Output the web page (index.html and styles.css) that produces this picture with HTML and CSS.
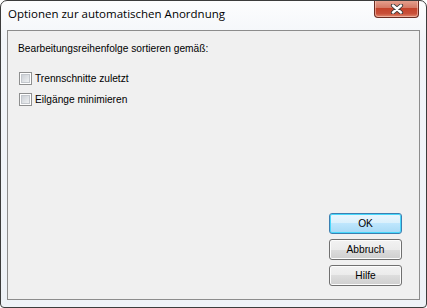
FILE: index.html
```html
<!DOCTYPE html>
<html>
<head>
<meta charset="utf-8">
<link rel="stylesheet" href="styles.css">
</head>
<body>
<div class="window">
  <div class="titlebar">
    <span class="title">Optionen zur automatischen Anordnung</span>
    <div class="close">
      <svg width="16" height="10" viewBox="0 0 16 10">
        <path d="M4 1.5 L12 8.5 M12 1.5 L4 8.5" stroke="#3a3a3a" stroke-width="4.2" stroke-linecap="round" fill="none"/>
        <path d="M4 1.5 L12 8.5 M12 1.5 L4 8.5" stroke="#ffffff" stroke-width="2.4" stroke-linecap="round" fill="none"/>
      </svg>
    </div>
  </div>
  <div class="client">
    <div class="label">Bearbeitungsreihenfolge sortieren gemäß:</div>
    <div class="options">
      <label class="check"><span class="box"></span><span>Trennschnitte zuletzt</span></label>
      <label class="check"><span class="box"></span><span>Eilgänge minimieren</span></label>
    </div>
    <div class="buttons">
      <div class="btn default">OK</div>
      <div class="btn">Abbruch</div>
      <div class="btn">Hilfe</div>
    </div>
  </div>
</div>
</body>
</html>
```

FILE: styles.css
```css
html, body {
  margin: 0;
  padding: 0;
  background: #ffffff;
}
.window {
  box-sizing: border-box;
  width: 427px;
  height: 308px;
  border: 1px solid #3c3c3c;
  border-radius: 7px 7px 4px 4px;
  background: linear-gradient(#fdfdfe, #f2f5f9 40px, #eef2f7);
  display: flex;
  flex-direction: column;
  overflow: hidden;
}
.titlebar {
  height: 29px;
  display: flex;
  align-items: flex-start;
  position: relative;
  flex: none;
}
.title {
  font-family: "Open Sans", "Noto Sans", sans-serif;
  font-size: 11.5px;
  color: #000;
  margin-left: 7px;
  margin-top: 5px;
  line-height: 16px;
  text-shadow: 0 0 8px #ffffff, 0 0 8px #ffffff;
}
.close {
  position: absolute;
  right: 7px;
  top: -1px;
  width: 45px;
  height: 18px;
  box-sizing: border-box;
  border: 1px solid #6b2c22;
  border-top: none;
  border-radius: 0 0 4px 4px;
  background: linear-gradient(#e8a593 0%, #d57a66 45%, #c4432b 50%, #c9503a 80%, #e08a6f 100%);
  box-shadow: inset 0 0 0 1px rgba(255,220,210,0.5);
  display: flex;
  align-items: center;
  justify-content: center;
}
.close svg { display: block; }
.client {
  flex: 1;
  margin: 0 6px 7px 6px;
  border: 1px solid #8c8c8c;
  background: #f0f0f0;
  display: flex;
  flex-direction: column;
  font-family: "Liberation Sans", Arial, sans-serif;
  font-size: 10.2px;
  color: #000;
}
.label {
  margin: 11px 0 0 10px;
  line-height: 13px;
}
.options {
  margin: 17px 0 0 11px;
  display: flex;
  flex-direction: column;
  gap: 8px;
}
.check {
  display: flex;
  align-items: center;
  gap: 3px;
  height: 13px;
  line-height: 13px;
}
.box {
  box-sizing: border-box;
  width: 13px;
  height: 13px;
  border: 1px solid #8e8f8f;
  background: #fff;
  padding: 1px;
  display: block;
}
.box::before {
  content: "";
  display: block;
  width: 9px;
  height: 9px;
  box-sizing: border-box;
  border: 1px solid #c3c7cc;
  background: linear-gradient(135deg, #cdd1d6, #eef0f2);
}
.buttons {
  margin: auto 17px 13px auto;
  display: flex;
  flex-direction: column;
  gap: 5px;
}
.btn {
  box-sizing: border-box;
  width: 73px;
  height: 21px;
  border: 1px solid #707070;
  border-radius: 3px;
  background: linear-gradient(#f2f2f2 0%, #ebebeb 50%, #dddddd 50%, #cfcfcf 100%);
  box-shadow: inset 0 0 0 1px #fcfcfc;
  display: flex;
  align-items: center;
  justify-content: center;
  line-height: 13px;
}
.btn.default {
  border-color: #3c7fb1;
  background: linear-gradient(#eaf6fd 0%, #d9f0fc 50%, #bee6fd 50%, #a7d9f5 100%);
  box-shadow: inset 0 0 0 1px #48d8fb;
}
```
